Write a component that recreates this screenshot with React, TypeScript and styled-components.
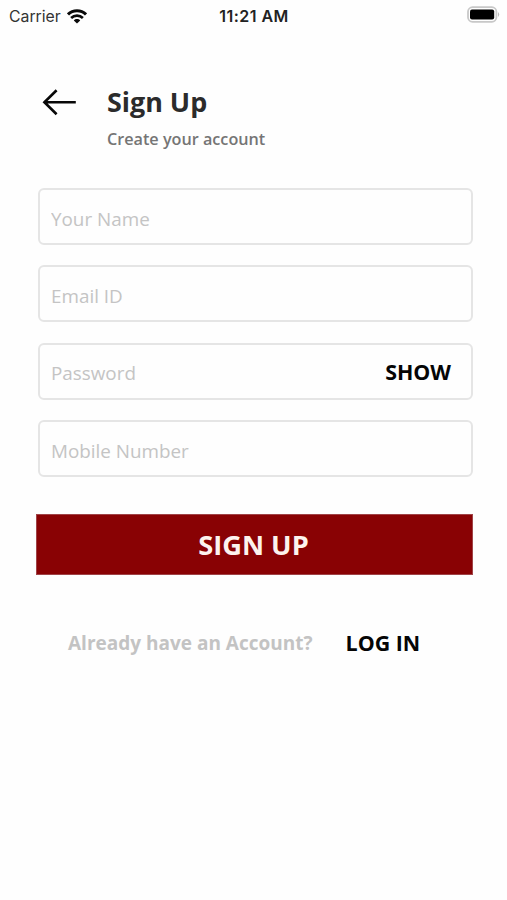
import React from 'react';
import styled, { createGlobalStyle } from 'styled-components';

const GlobalStyle = createGlobalStyle`
  * { box-sizing: border-box; }
  body { margin: 0; background: #fefefe; }
  button, input { font: inherit; border: 0; padding: 0; margin: 0; background: none; }
`;

const Screen = styled.div`
  width: 507px;
  height: 900px;
  overflow: hidden;
  display: flex;
  flex-direction: column;
  background: #fefefe;
  font-family: 'Open Sans', 'Noto Sans', sans-serif;
`;

const StatusBar = styled.div`
  height: 32px;
  padding: 0 7px 0 9px;
  display: grid;
  grid-template-columns: 1fr auto 1fr;
  align-items: center;
  font-family: Inter, 'Liberation Sans', sans-serif;
  font-size: 15.8px;
  line-height: 30px;
  color: #333;
`;

const Carrier = styled.div`
  display: flex;
  align-items: center;
  gap: 6px;
`;

const StatusText = styled.span`
  padding-top: 1px;
`;

const Time = styled.div`
  padding-right: 1px;
  font-weight: 600;
  font-size: 16px;
  letter-spacing: 0.45px;
  color: #222;
`;

const Battery = styled.svg`
  justify-self: end;
  margin-bottom: 2px;
`;

const Header = styled.header`
  margin-top: 52px;
  padding-left: 42px;
  display: flex;
  gap: 30px;
  align-items: flex-start;
`;

const BackButton = styled.button`
  display: flex;
  width: 35px;
  height: 36px;
  align-items: center;
`;

const Title = styled.h1`
  margin: 0;
  font-size: 26.9px;
  line-height: 36px;
  font-weight: 700;
  color: #2b2b2b;
`;

const Subtitle = styled.p`
  margin: 8px 0 0;
  font-size: 16.2px;
  line-height: 22px;
  font-weight: 600;
  color: #757575;
`;

const Form = styled.form`
  margin: 38px 34px 0 38px;
  display: flex;
  flex-direction: column;
  gap: 20.3px;
`;

const Field = styled.label`
  height: 57px;
  display: flex;
  align-items: center;
  padding: 4.4px 20px 0 11px;
  border: 2px solid #e5e5e5;
  border-radius: 6px;
`;

const Input = styled.input`
  flex: 1;
  min-width: 0;
  height: 28px;
  font-size: 18.85px;
  color: #333;
  outline: none;
  &::placeholder { color: #c4c4c4; opacity: 1; }
`;

const TextButton = styled.button<{ $lift?: number }>`
  font-size: 21.4px;
  line-height: 28px;
  font-weight: 700;
  color: #050505;
  margin-bottom: ${(p) => p.$lift ?? 0}px;
`;

const Submit = styled.button`
  margin: 37px 34px 0 36px;
  padding: 2px 2px 0 0;
  height: 61px;
  flex: none;
  background: #890204;
  border: 1px solid #a04347;
  color: #fdf3ee;
  font-size: 27.2px;
  line-height: 36px;
  font-weight: 700;
`;

const Footer = styled.div`
  margin-top: 54px;
  padding-left: 68px;
  display: flex;
  align-items: center;
  gap: 33px;
`;

const Prompt = styled.span`
  font-size: 19px;
  line-height: 28px;
  font-weight: 700;
  color: #c3c3c3;
`;

const WifiIcon = () => (
  <svg width="20" height="15" viewBox="0 0 20 15" fill="none" stroke="#0a0a0a" strokeWidth="3">
    <path d="M1 5.4 C6 0.4 14 0.4 19 5.4" />
    <path d="M4.1 9 C7.4 5.8 12.6 5.8 15.9 9" strokeWidth="2.6" />
    <path d="M6.8 11.4 C8.5 9.6 11.5 9.6 13.2 11.4 L10 14.6 Z" fill="#0a0a0a" stroke="none" />
  </svg>
);

const BatteryIcon = () => (
  <Battery width="34" height="18" viewBox="0 0 34 18">
    <rect x="2" y="1.2" width="28.4" height="14.6" rx="4.5" fill="#fefefe" stroke="#c8c8c8" strokeWidth="1.8" />
    <rect x="4" y="3.4" width="24.2" height="10.2" rx="2" fill="#000" />
    <path d="M32 6 Q34.4 8.5 32 11 Z" fill="#bbb" />
  </Battery>
);

const ArrowIcon = () => (
  <svg width="35" height="28" viewBox="0 0 35 28" fill="none" stroke="#080808" strokeWidth="2.6">
    <path d="M33.8 14.3 H2.5 M14.6 2.3 L2.4 14.3 L14.6 26.3" />
  </svg>
);

const fields = ['Your Name', 'Email ID', 'Password', 'Mobile Number'];

export default function App() {
  return (
    <>
      <GlobalStyle />
      <Screen>
        <StatusBar>
          <Carrier>
            <StatusText>Carrier</StatusText>
            <WifiIcon />
          </Carrier>
          <Time>11:21 AM</Time>
          <BatteryIcon />
        </StatusBar>
        <Header>
          <BackButton aria-label="Back">
            <ArrowIcon />
          </BackButton>
          <div>
            <Title>Sign Up</Title>
            <Subtitle>Create your account</Subtitle>
          </div>
        </Header>
        <Form id="signup" onSubmit={(e) => e.preventDefault()}>
          {fields.map((name) => (
            <Field key={name}>
              <Input placeholder={name} type={name === 'Password' ? 'password' : 'text'} />
              {name === 'Password' && (
                <TextButton type="button" $lift={3}>
                  SHOW
                </TextButton>
              )}
            </Field>
          ))}
        </Form>
        <Submit form="signup" type="submit">
          SIGN UP
        </Submit>
        <Footer>
          <Prompt>Already have an Account?</Prompt>
          <TextButton type="button">LOG IN</TextButton>
        </Footer>
      </Screen>
    </>
  );
}
